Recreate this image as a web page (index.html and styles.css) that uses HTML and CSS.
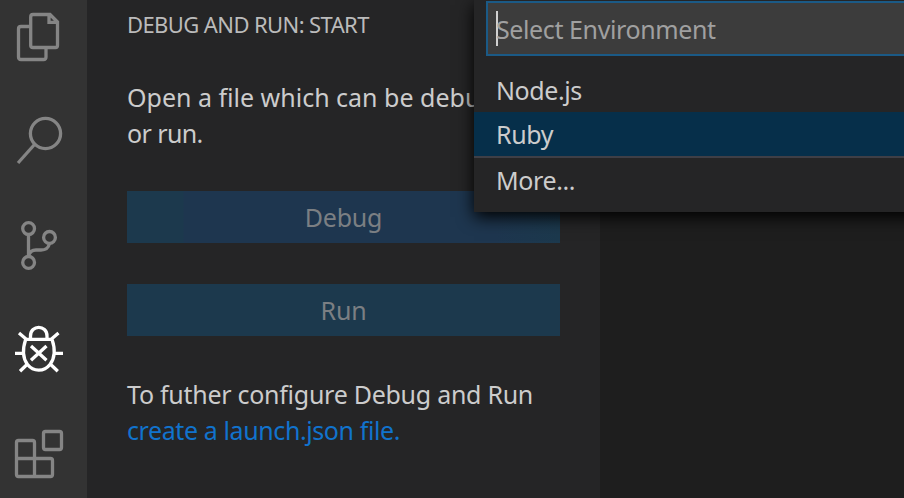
FILE: index.html
```html
<!DOCTYPE html>
<html lang="en">
<head>
<meta charset="utf-8">
<title>Debug and Run</title>
<link rel="stylesheet" href="styles.css">
</head>
<body>
<div class="workbench">
  <nav class="activity-bar">
    <svg viewBox="0 0 87 90"><path d="M30 26.500H21Q18.500 26.500 18.500 29V57Q18.500 59.500 21 59.500H43.500Q46 59.500 46 57V48.500M33 14.500H50L57.500 22V45.500Q57.500 47.500 55.500 47.500H33Q30.700 47.500 30.700 45.500V17Q30.700 14.500 33 14.500ZM49 14.500V22.300H57.500"/></svg>
    <svg viewBox="0 0 87 90"><circle cx="45.500" cy="33.500" r="15.100"/><path d="M34.500 44.500L18 63"/></svg>
    <svg viewBox="0 0 87 90"><circle cx="28.600" cy="23.600" r="5.900"/><circle cx="49.500" cy="32.400" r="5.900"/><circle cx="28.600" cy="57.400" r="5.900"/><path d="M28.500 30V51M49.500 38.500C48.500 43 46 45 41 45H36C31.500 45 29.500 47 28.500 51"/></svg>
    <svg class="active" viewBox="0 0 87 90"><path d="M30.500 34V31C30.500 19.500 47 19.500 47 31V34M25.700 34.300H52C55.300 44 55 53 50 59.500C44 67 33.500 67 27.500 59.500C22.500 53 22.500 44 25.700 34.300ZM26 34L19 28M51.500 34L58.500 28M15 48.300H23M54.500 48.300H63M28 58.500L20 66.300M49.700 58.500L57.800 66.300M31 41L46.500 55.300M46.500 41L31 55.300"/></svg>
    <svg viewBox="0 0 87 90"><path d="M18.500 32.500H32.500Q34.500 32.500 34.500 34.500V50.500H50.500Q52.500 50.500 52.500 52.500V66.500Q52.500 68.500 50.500 68.500H18.500Q16.500 68.500 16.500 66.500V34.500Q16.500 32.500 18.500 32.500ZM16.500 50.500H34.500V68.500"/><rect x="43.500" y="23.500" width="18" height="18" rx="2"/></svg>
  </nav>
  <aside class="sidebar">
    <h1>DEBUG AND RUN: START</h1>
    <p class="intro"><span class="line-open">Open a file which can be debu</span><br><span class="line-or">or run.</span></p>
    <button class="debug" disabled>Debug</button>
    <button disabled>Run</button>
    <p class="configure"><span class="line-to">To futher configure Debug and Run</span><br><a>create a launch.json file.</a></p>
  </aside>
  <main class="editor"></main>
  <section class="quick-pick">
    <div class="input"><i class="caret"></i><span>Select Environment</span></div>
    <ul>
      <li>Node.js</li>
      <li class="selected">Ruby</li>
      <li class="separated">More...</li>
    </ul>
  </section>
</div>
</body>
</html>
```
FILE: styles.css
```css
* { box-sizing: border-box; }
body { margin: 0; background: #1e1e1e; font: 25px/36px "Noto Sans", sans-serif; color: #ccc; overflow: hidden; }
.workbench { position: relative; display: flex; width: 904px; height: 498px; overflow: hidden; }
.activity-bar { width: 87px; flex: none; background: #333; display: grid; grid-template-rows: 100px 105px 100px 103px 90px; }
.activity-bar svg { width: 87px; height: 90px; fill: none; stroke: #858585; stroke-width: 3.3; }
.activity-bar .active { stroke: #fff; stroke-width: 3.3; }
.sidebar { width: 513px; flex: none; background: #252526; padding: 6px 40px 0; white-space: nowrap; }
h1 { margin: 0; font-size: 22px; line-height: 36px; font-weight: 400; color: #bbb; letter-spacing: -.6px; }
p { margin: 0; letter-spacing: -.4px; }
.intro { margin-top: 37px; }
.line-open { letter-spacing: 0; }
.line-or { letter-spacing: -.6px; }
.line-to { letter-spacing: -.27px; }
button { display: block; width: 433px; height: 52px; margin: 40px 0 0; padding: 0; border: 0; background: #1c394d; color: #7b7f83; font: inherit; letter-spacing: -.2px; }
.debug { background: linear-gradient(90deg, #1c394d 56px, #1e364f 57px 85%, #1c394d); }
button + button { margin-top: 41px; }
.configure { margin-top: 40px; }
.configure a { color: #1173cd; }
.editor { flex: 1; background: #1e1e1e; }
.quick-pick { position: absolute; left: 474px; top: 0; width: 460px; height: 212px; padding: 1px 0 0; background: #252526; box-shadow: 0 5px 16px #000; letter-spacing: -.4px; }
.input { display: flex; align-items: center; height: 55px; margin-left: 12px; padding-left: 8px; border: 2px solid #1b5a86; background: #3c3c3c; color: #a0a0a0; }
.caret { width: 2px; height: 35px; margin-right: -2px; background: #d0d0d0; }
ul { list-style: none; margin: 12px 0 0; padding: 0; }
li { height: 44px; line-height: 44px; padding-left: 22px; }
.selected { background: #062f4a; }
.separated { border-top: 2px solid #3f3f46; height: 46px; line-height: 45px; }
```
